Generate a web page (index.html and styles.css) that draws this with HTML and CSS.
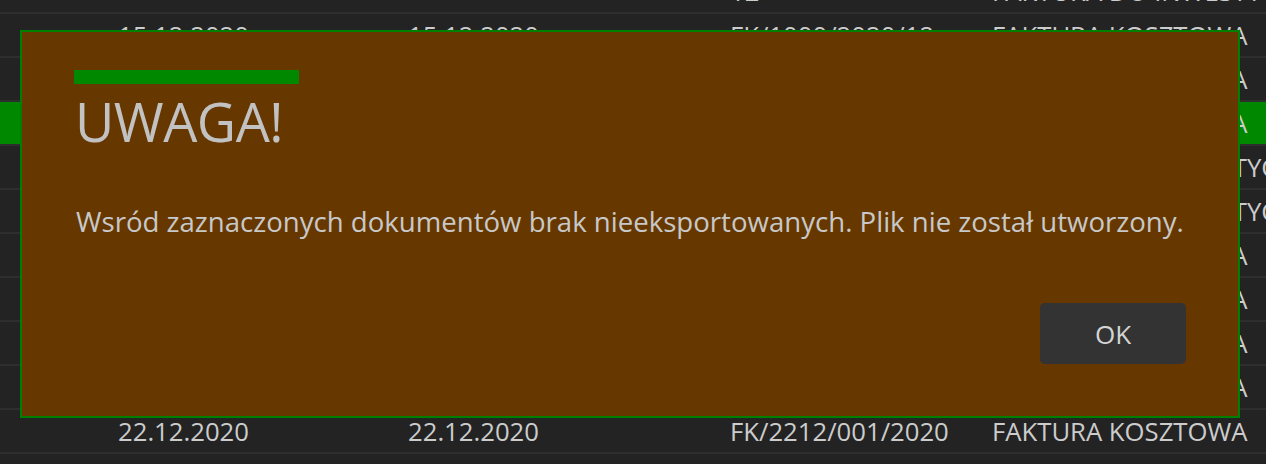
FILE: index.html
```html
<!DOCTYPE html>
<html>
<head>
<title>Eksport dokumentów</title>
<meta charset="UTF-8">
<meta name="viewport" content="width=device-width, initial-scale=1.0">
<link rel="stylesheet" href="styles.css">
</head>
<body>
<div class="doc-list">
<div class="doc-row"><span></span><span></span><span>12</span><span>FAKTURA DO INWESTYCJI</span></div>
<div class="doc-row"><span>15.12.2020</span><span>15.12.2020</span><span>FK/1000/2020/12</span><span>FAKTURA KOSZTOWA</span></div>
<div class="doc-row"><span>16.12.2020</span><span>16.12.2020</span><span>FK/1001/2020/12</span><span>FAKTURA KOSZTOWA</span></div>
<div class="doc-row selected"><span>17.12.2020</span><span>17.12.2020</span><span>FK/1002/2020/12</span><span>FAKTURA KOSZTOWA</span></div>
<div class="doc-row"><span>18.12.2020</span><span>18.12.2020</span><span>FK/1003/2020/12</span><span>FAKTURA DO INWESTYCJI</span></div>
<div class="doc-row"><span>18.12.2020</span><span>18.12.2020</span><span>FK/1004/2020/12</span><span>FAKTURA DO INWESTYCJI</span></div>
<div class="doc-row"><span>21.12.2020</span><span>21.12.2020</span><span>FK/2112/001/2020</span><span>FAKTURA KOSZTOWA</span></div>
<div class="doc-row"><span>21.12.2020</span><span>21.12.2020</span><span>FK/2112/002/2020</span><span>FAKTURA KOSZTOWA</span></div>
<div class="doc-row"><span>21.12.2020</span><span>21.12.2020</span><span>FK/2112/003/2020</span><span>FAKTURA KOSZTOWA</span></div>
<div class="doc-row"><span>21.12.2020</span><span>21.12.2020</span><span>FK/2112/004/2020</span><span>FAKTURA KOSZTOWA</span></div>
<div class="doc-row"><span>22.12.2020</span><span>22.12.2020</span><span>FK/2212/001/2020</span><span>FAKTURA KOSZTOWA</span></div>
<div class="doc-row last"></div>
</div>

<div class="dialog">
<div class="dialog-bar"></div>
<h2>UWAGA!</h2>
<p>Wsród zaznaczonych dokumentów brak nieeksportowanych. Plik nie został utworzony.</p>
<div class="dialog-buttons">
<button type="button">OK</button>
</div>
</div>
</body>
</html>
```

FILE: styles.css
```css
html{
    height: 464px;
    overflow: hidden;
}
body{
    margin: 0;
    background: #232323;
    font-family: "Open Sans", "Noto Sans", sans-serif;
    color: #cccccc;
    overflow: hidden;
    height: 464px;
    position: relative;
}
.doc-list{
    margin-top: -30px;
}
.doc-row{
    display: grid;
    grid-template-columns: 290px 322px 262px 1fr;
    padding-left: 118px;
    height: 42px;
    align-items: center;
    border-bottom: 2px solid #2e2e2e;
    font-size: 25.7px;
    white-space: nowrap;
    overflow: hidden;
}
.doc-row span{
    overflow: hidden;
}
.doc-row.selected{
    background: #008800;
}
.doc-row.last{
    height: 8px;
    border-bottom: none;
}
.dialog{
    position: absolute;
    left: 20px;
    top: 30px;
    width: 1112px;
    height: 294px;
    padding: 38px 52px 52px 52px;
    background: #663800;
    border: 2px solid #008000;
    display: flex;
    flex-direction: column;
}
.dialog-bar{
    width: 225px;
    height: 14px;
    background: #008800;
}
.dialog h2{
    font-size: 54px;
    font-weight: 400;
    letter-spacing: -0.5px;
    line-height: 54px;
    color: #c2c2c2;
    margin: 10px 0 0 1px;
}
.dialog p{
    font-size: 27.6px;
    line-height: 36px;
    color: #c8c8c8;
    margin: 55px 0 0 2px;
}
.dialog-buttons{
    margin-top: auto;
    display: flex;
    justify-content: flex-end;
}
.dialog-buttons button{
    width: 146px;
    height: 61px;
    background: #333333;
    color: #d4d4d4;
    border: none;
    border-radius: 5px;
    font-family: inherit;
    font-size: 26px;
    cursor: pointer;
}
```
